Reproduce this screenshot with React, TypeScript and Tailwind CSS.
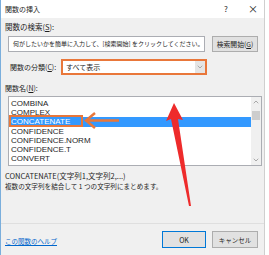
import { ChevronDown, ChevronUp } from "lucide-react";

const items = ["COMBINA", "COMPLEX", "CONCATENATE", "CONFIDENCE", "CONFIDENCE.NORM", "CONFIDENCE.T", "CONVERT"];

export default function App() {
  return (
    <div
      className="relative w-[269px] h-[255px] overflow-hidden bg-white text-[7px] leading-[10px] text-[#1e1e1e]"
      style={{ fontFamily: '"Noto Sans CJK JP", "Liberation Sans", sans-serif' }}
    >
      <div className="w-[265px] h-full border-l border-r border-l-[#7aaedc] border-r-[#cfcfcf] flex flex-col">
        {/* title bar */}
        <div className="h-[18px] bg-white flex items-center pl-[4px]">
          <span className="flex-1">関数の挿入</span>
          <span className="w-[10px] text-center mr-[17px] text-[8px]">?</span>
          <span className="w-[10px] text-center mr-[6px] text-[10px]">×</span>
        </div>

        <div className="flex-1 bg-[#f0f0f0] px-[4px] flex flex-col">
          <div className="mt-[4px] h-[10px] text-[7.5px]">
            関数の検索(<span className="underline">S</span>):
          </div>

          <div className="mt-[4px] flex items-center">
            <div className="ml-[3px] w-[197px] h-[16px] bg-white border border-[#abadb3] flex items-center pl-[4px] text-[6px] whitespace-nowrap">
              何がしたいかを簡単に入力して、[検索開始] をクリックしてください。
            </div>
            <div className="ml-[7px] w-[46px] h-[16px] bg-[#e1e1e1] border border-[#adadad] flex items-center justify-center text-[6.8px] whitespace-nowrap">
              検索開始(<span className="underline">G</span>)
            </div>
          </div>

          <div className="mt-[7px] flex items-center">
            <span className="ml-[5px] w-[51px] whitespace-nowrap text-[7px]">
              関数の分類(<span className="underline">C</span>):
            </span>
            <div className="w-[146px] h-[16px] bg-white border-2 border-[#e9773a] flex items-center pl-[3px]">
              <span className="flex-1 text-[7px]">すべて表示</span>
              <div className="w-[10px] h-full bg-[#e5e5e5] flex items-center justify-center">
                <ChevronDown size={8} strokeWidth={1.5} className="text-[#6d6d6d]" />
              </div>
            </div>
          </div>

          <div className="mt-[8px] h-[10px] text-[7px]">
            関数名(<span className="underline">N</span>):
          </div>

          <div className="mt-[3px] ml-[3px] w-[254px] h-[70px] bg-white border border-[#abadb3] flex">
            <div
              className="flex-1 pt-[2px] text-[8px] leading-[9.2px]"
              style={{ fontFamily: '"Liberation Sans", sans-serif' }}
            >
              {items.map((it) => (
                <div
                  key={it}
                  className={
                    it === "CONCATENATE"
                      ? "h-[9.2px] pl-[2px] bg-[#3399ff] text-white"
                      : "h-[9.2px] pl-[2px]"
                  }
                >
                  {it}
                </div>
              ))}
            </div>
            <div className="w-[10px] bg-[#f0f0f0] flex flex-col items-center">
              <ChevronUp size={8} strokeWidth={1.5} className="text-[#606060] mt-[1px]" />
              <div className="mt-[5px] w-[8px] h-[9px] bg-[#cdcdcd]" />
              <div className="flex-1" />
              <ChevronDown size={8} strokeWidth={1.5} className="text-[#606060] mb-[1px]" />
            </div>
          </div>

          <div className="mt-[5px] text-[7.5px] whitespace-nowrap">CONCATENATE(文字列1,文字列2,...)</div>
          <div className="mt-[0px] text-[6.6px] whitespace-nowrap">複数の文字列を結合して 1 つの文字列にまとめます。</div>

          <div className="flex-1" />
          <div className="h-px bg-[#dfdfdf] -mx-[4px]" />

          <div className="h-[31px] flex items-center">
            <span className="flex-1 text-[#0066cc] underline text-[6.5px] mt-[2px]">この関数のヘルプ</span>
            <div className="w-[44px] h-[17px] bg-[#e1e1e1] border border-[#0078d7] flex items-center justify-center text-[7px]">
              OK
            </div>
            <div className="ml-[6px] mr-[2px] w-[46px] h-[17px] bg-[#e1e1e1] border border-[#adadad] flex items-center justify-center text-[6.5px]">
              キャンセル
            </div>
          </div>
        </div>
      </div>

      {/* annotation: highlight box around CONCATENATE */}
      <div className="absolute left-[9px] top-[115px] w-[74px] h-[12px] border-2 border-[#e9773a]" />

      {/* annotations: arrows */}
      <svg className="absolute left-0 top-0" width="269" height="255" viewBox="0 0 269 255">
        <path d="M86 120.5 L119 120.5" stroke="#e9773a" strokeWidth="2.5" />
        <path d="M95 113 L86 120.5 L95 128" stroke="#e9773a" strokeWidth="2.5" fill="none" strokeLinejoin="miter" />
        <polygon points="174,103 183,120 178,119 191,206 189,206 171,119 166,121" fill="#ee2b2b" />
      </svg>
    </div>
  );
}
